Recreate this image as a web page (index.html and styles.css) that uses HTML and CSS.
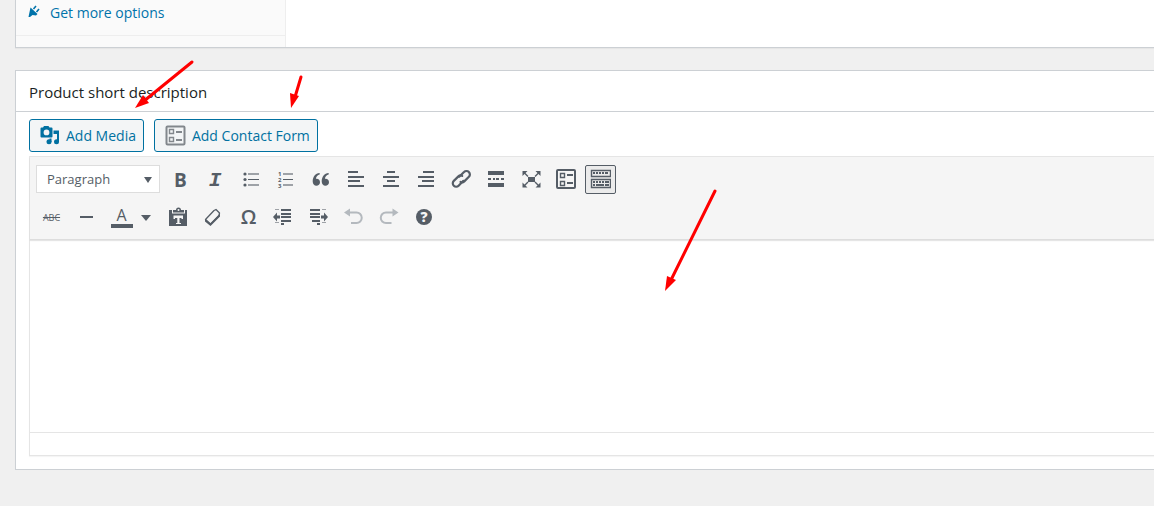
FILE: index.html
```
<!DOCTYPE html>
<html lang="en">
<head>
  <meta charset="UTF-8">
  <meta name="viewport" content="width=device-width, initial-scale=1.0">
  <title>Edit product</title>
  <link rel="stylesheet" href="styles.css">
</head>
<body>
  <section class="panel product-data">
    <div class="product-tabs">
      <a href="#" class="tab-link">
        <svg class="plug-icon" viewBox="0 0 12 12">
          <path d="M2.500 2.500L9.500 9 8 10.500 4.500 10 2 12H.5L1 9.500z"/>
          <path d="M5.500 4l2.500-3M8.500 7l2.500-3" stroke="currentColor" stroke-width="1.600"/>
        </svg>
        Get more options
      </a>
    </div>
  </section>

  <section class="panel">
    <h2 class="panel-title">Product short description</h2>
    <div class="panel-body">
      <div class="media-buttons">
        <button type="button" class="media-btn">
          <svg class="media-icon" viewBox="0 0 20 20">
            <path fill-rule="evenodd" d="M1.500 2.500H3L4 1H8.500L9.500 2.500H11.500Q12.500 2.500 12.500 3.500V11.500Q12.500 12.500 11.500 12.500H1.500Q.5 12.500.5 11.500V3.500Q.5 2.500 1.500 2.500ZM6.500 4.500a2.900 2.900 0 1 0 0 5.800a2.900 2.900 0 1 0 0-5.800z"/>
            <path d="M13.500 5.500H19V17h-2V9h-3.500zM9.500 13.500h2V17h-2z"/>
            <circle cx="16.500" cy="16.800" r="2.500"/>
            <circle cx="9" cy="16.800" r="2.500"/>
          </svg>
          Add Media
        </button>
        <button type="button" class="media-btn">
          <svg class="form-icon" viewBox="0 0 21 21">
            <rect x="1.500" y="1.500" width="18" height="18" rx="1" fill="none" stroke="currentColor" stroke-width="2"/>
            <path d="M4.500 4.500h4v4h-4zM4.500 12.500h4v4h-4z" fill="none" stroke="currentColor" stroke-width="1.400"/>
            <path d="M11 6h6v2h-6zM11 14h6v2h-6z"/>
          </svg>
          Add Contact Form
        </button>
      </div>

      <div class="editor">
        <div class="toolbar">
          <div class="toolbar-row">
            <div class="format">
              <select class="format-select" aria-label="Format">
                <option>Paragraph</option>
                <option>Heading 1</option>
                <option>Heading 2</option>
                <option>Preformatted</option>
              </select>
            </div>
            <button type="button" class="tool bold" aria-label="Bold">B</button>
            <button type="button" class="tool" aria-label="Italic">
              <svg class="italic-icon" viewBox="0 0 21 21"><text class="italic-mark" x="10" y="17">I</text></svg>
            </button>
            <button type="button" class="tool" aria-label="Bulleted list">
              <svg viewBox="0 0 21 21">
                <circle cx="5" cy="5" r="1.600"/><circle cx="5" cy="10.500" r="1.600"/><circle cx="5" cy="16" r="1.600"/>
                <path class="soft" d="M8 4h11v2H8zM8 15h11v2H8z"/>
                <path d="M8 10h11v1H8z"/>
              </svg>
            </button>
            <button type="button" class="tool" aria-label="Numbered list">
              <svg viewBox="0 0 21 21">
                <text class="digit" x="3" y="7">1</text>
                <text class="digit" x="3" y="13">2</text>
                <text class="digit" x="3" y="19">3</text>
                <path class="soft" d="M8 4h10v2H8zM8 15h10v2H8z"/>
                <path d="M8 10h10v1H8z"/>
              </svg>
            </button>
            <button type="button" class="tool" aria-label="Blockquote">
              <svg viewBox="0 0 21 21">
                <path id="quote-mark" d="M9.500 4C5.500 4.500 2.700 7.500 2.700 12.500c0 2.600 1.600 4.200 3.700 4.200 2 0 3.600-1.500 3.600-3.500S8.600 9.700 6.700 9.700c-.3 0-.6 0-.8.1C6.200 7.600 7.500 6.200 9.900 5.300z"/>
                <use href="#quote-mark" x="9"/>
              </svg>
            </button>
            <button type="button" class="tool" aria-label="Align left">
              <svg viewBox="0 0 21 21"><path d="M3 2h10v2H3zM3 7h16v2H3zM3 11h12v2H3zM3 16h16v2H3z"/></svg>
            </button>
            <button type="button" class="tool" aria-label="Align center">
              <svg viewBox="0 0 21 21"><path d="M7 2h8v2H7zM3 7h16v2H3zM7 11h8v2H7zM3 16h16v2H3z"/></svg>
            </button>
            <button type="button" class="tool" aria-label="Align right">
              <svg viewBox="0 0 21 21"><path d="M8 2h11v2H8zM3 7h16v2H3zM7 11h12v2H7zM3 16h16v2H3z"/></svg>
            </button>
            <button type="button" class="tool" aria-label="Insert link">
              <svg viewBox="0 0 21 21">
                <g fill="none" stroke="currentColor" stroke-width="2.200" stroke-linecap="round">
                  <path d="M9.200 7.700l4.800-4.600a3.300 3.300 0 0 1 4.900 0a3.300 3.300 0 0 1 0 4.700l-4.600 4.600a3.300 3.300 0 0 1-3.800.5"/>
                  <path d="M13.400 11.800l-4.800 4.900a3.300 3.300 0 0 1-4.800 0a3.300 3.300 0 0 1 0-4.800l4.600-4.500a3.300 3.300 0 0 1 3.800-.5"/>
                </g>
              </svg>
            </button>
            <button type="button" class="tool" aria-label="Insert Read More tag">
              <svg viewBox="0 0 21 21"><path d="M3 2h16v4H3zM3 9h3v2H3zM8 9h2v2H8zM11 9h3v2h-3zM16 9h3v2h-3zM3 14h16v4H3z"/></svg>
            </button>
            <button type="button" class="tool" aria-label="Fullscreen">
              <svg viewBox="0 0 21 21">
                <path d="M8 8h7v5H8zM2.500 2h5L2.500 7zM20.500 2h-5l5 5zM2.500 18.500h5l-5-5zM20.500 18.500h-5l5-5z"/>
                <path d="M4 3.500l4 4M19 3.500l-4 4M4 17l4-4M19 17l-4-4" stroke="currentColor" stroke-width="1.400"/>
              </svg>
            </button>
            <button type="button" class="tool" aria-label="Insert contact form">
              <svg viewBox="0 0 21 21">
                <rect x="2" y="1" width="18" height="18" rx="1" fill="none" stroke="currentColor" stroke-width="2"/>
                <path d="M5.500 4.500h4v4h-4zM5.500 12.500h4v4h-4z" fill="none" stroke="currentColor" stroke-width="1.400"/>
                <path d="M12 5h6v2h-6zM12 13h6v2h-6z"/>
              </svg>
            </button>
            <button type="button" class="tool active" aria-label="Toolbar toggle" aria-pressed="true">
              <svg viewBox="0 0 21 21">
                <path d="M1.500 1.500h19v6h-19zM1.500 10.500h19v8h-19z" fill="none" stroke="currentColor" stroke-width="1.400"/>
                <path d="M3 3h2v2H3zM6 3h2v2H6zM9 3h2v2H9zM12 3h2v2h-2zM15 3h3v2h-3zM3 12h2v2H3zM6 12h2v2H6zM9 12h2v2H9zM12 12h2v2h-2zM15 12h4v2h-4zM3 15h2v2H3zM6 15h8v2H6zM15 15h4v2h-4z"/>
              </svg>
            </button>
          </div>

          <div class="toolbar-row">
            <button type="button" class="tool strike" aria-label="Strikethrough">ABC</button>
            <button type="button" class="tool" aria-label="Horizontal line">
              <svg viewBox="0 0 21 21"><path d="M4 9h13v2H4z"/></svg>
            </button>
            <div class="color-split">
              <button type="button" class="tool" aria-label="Text color"><span class="color-letter">A</span></button>
              <button type="button" class="color-open" aria-label="Choose text color"><span class="caret"></span></button>
            </div>
            <button type="button" class="tool" aria-label="Paste as text">
              <svg viewBox="0 0 21 21">
                <path d="M5 5.500V3h3a2.500 2.500 0 0 1 5 0h3v2.500z"/>
                <path d="M1 3h3v3.500h13V3h2v16H1z"/>
                <path class="cut" d="M5.500 8.500h9.500v3.500h-1.500V11H11.500V16H13v1H8v-1h1.300V11H7V12H5.500z"/>
                <circle class="cut" cx="10.500" cy="3" r="1"/>
              </svg>
            </button>
            <button type="button" class="tool" aria-label="Clear formatting">
              <svg viewBox="0 0 21 21">
                <path d="M11 3.500L13 2.500 16.500 6 16 8.500 7.500 17 2.500 12.500z" fill="none" stroke="currentColor" stroke-width="1.300" stroke-linejoin="round"/>
                <path d="M2 12l5.500 4.500L17 6.500V9.500L7.500 19 2 14.500z"/>
              </svg>
            </button>
            <button type="button" class="tool omega" aria-label="Special character">Ω</button>
            <button type="button" class="tool" aria-label="Decrease indent">
              <svg viewBox="0 0 21 21">
                <path d="M8 2h10v2H8zM8 6h10v2H8zM8 9h10v2H8zM8 13h10v2H8zM8 16h3v2H8zM4 5.500v3H7v3H4v3L0 10z"/>
                <path class="soft" d="M2 2h4v1H2zM2 15h4v1H2z"/>
              </svg>
            </button>
            <button type="button" class="tool" aria-label="Increase indent">
              <svg viewBox="0 0 21 21">
                <path d="M2 2h10v2H2zM2 6h10v2H2zM2 9h10v2H2zM4 13h8v2H4zM9 16h3v2H9zM16 5.500v3H13v3h3v3l4-4.500z"/>
                <path class="soft" d="M14 2h4v1h-4zM14 15h4v1h-4z"/>
              </svg>
            </button>
            <button type="button" class="tool" aria-label="Undo" disabled>
              <svg viewBox="0 0 21 21">
                <path d="M1 5.500L7 1.500v8z"/>
                <path d="M6 5.500h7.500a5 5 0 0 1 0 10.500H8" fill="none" stroke="currentColor" stroke-width="2"/>
              </svg>
            </button>
            <button type="button" class="tool" aria-label="Redo" disabled>
              <svg viewBox="0 0 21 21">
                <path d="M20.500 5.500l-6-4v8z"/>
                <path d="M15 5.500H8A5 5 0 0 0 8 16h5.500" fill="none" stroke="currentColor" stroke-width="2"/>
              </svg>
            </button>
            <button type="button" class="tool" aria-label="Keyboard shortcuts">
              <svg viewBox="0 0 21 21">
                <circle cx="11" cy="10" r="8"/>
                <text class="help-mark" x="11" y="15">?</text>
              </svg>
            </button>
          </div>
        </div>
        <textarea class="editor-text" aria-label="Product short description"></textarea>
        <div class="status-bar"></div>
      </div>
    </div>
  </section>

  <!-- pointers drawn over the page -->
  <svg class="arrows" width="740" height="300" viewBox="0 0 740 300">
    <g stroke="#f00" stroke-width="3" stroke-linecap="round">
      <path d="M192 62L144 101"/>
      <path d="M301 77L295 97"/>
      <path d="M715 191L671 280"/>
    </g>
    <g fill="#f00">
      <path d="M135 108l8-13 6 8z"/>
      <path d="M291 108l-1-15 9 3z"/>
      <path d="M665 291l2-15 9 4z"/>
    </g>
  </svg>
</body>
</html>
```
FILE: styles.css
```
* {
  box-sizing: border-box;
}

body {
  font-family: "Open Sans", "Noto Sans", sans-serif;
  font-size: 14px;
  margin: 0;
  padding-left: 15px;
  background-color: #f0f0f0;
  color: #23282d;
  overflow-x: hidden;
}

button,
select,
textarea {
  font-family: inherit;
  font-size: 14px;
}

svg {
  display: block;
  flex: none;
  fill: currentColor;
}

.panel {
  background-color: #fff;
  border: 1px solid #ccd0d4;
  border-right: none;
  box-shadow: 0 1px 1px rgba(0, 0, 0, 0.04);
}

.product-data {
  border-top: none;
  margin-bottom: 22px;
}

.product-tabs {
  width: 270px;
  padding-bottom: 11px;
  background-color: #fafafa;
  border-right: 1px solid #eee;
}

.tab-link {
  display: flex;
  align-items: center;
  gap: 10px;
  height: 36px;
  padding: 0 12px 10px;
  border-bottom: 1px solid #eee;
  color: #0073aa;
  text-decoration: none;
}

.plug-icon {
  width: 12px;
  height: 12px;
  margin-bottom: 4px;
}

.panel-title {
  margin: 0;
  padding: 3px 13px 0;
  border-bottom: 1px solid #ccd0d4;
  color: #1a1f24;
  font-size: 15px;
  font-weight: 500;
  line-height: 37px;
}

.panel-body {
  padding: 7px 0 13px 13px;
}

.media-buttons {
  display: flex;
  gap: 10px;
  margin-bottom: 4px;
}

.media-btn {
  display: flex;
  align-items: center;
  gap: 6px;
  height: 33px;
  padding: 0 7px 1px 10px;
  background-color: #f3f5f6;
  border: 1px solid #0071a1;
  border-radius: 3px;
  color: #0071a1;
  cursor: pointer;
}

.media-icon {
  width: 20px;
  height: 20px;
}

.form-icon {
  width: 21px;
  height: 21px;
  color: #82878c;
}

.editor {
  border: 1px solid #e5e5e5;
  border-right: none;
  box-shadow: 0 1px 1px rgba(0, 0, 0, 0.04);
}

.toolbar {
  display: flex;
  flex-direction: column;
  gap: 9px;
  padding: 8px 6px 7px;
  background-color: #f5f5f5;
  border-bottom: 1px solid #ddd;
  box-shadow: 0 1px 1px rgba(0, 0, 0, 0.1);
}

.toolbar-row {
  display: flex;
  gap: 4px;
}

.format {
  position: relative;
  width: 124px;
  margin-right: 1px;
}

.format::after {
  content: "";
  position: absolute;
  right: 8px;
  top: 12px;
  border: 4px solid transparent;
  border-top: 6px solid #555d66;
  border-bottom: none;
  pointer-events: none;
}

.format-select {
  width: 100%;
  height: 28px;
  padding: 0 10px;
  appearance: none;
  background-color: #fff;
  border: 1px solid #ddd;
  border-radius: 0;
  color: #555d66;
  font-size: 13px;
}

.tool {
  display: flex;
  align-items: center;
  justify-content: center;
  width: 31px;
  height: 29px;
  padding: 0;
  background: none;
  border: 1px solid transparent;
  border-radius: 2px;
  color: #555d66;
  cursor: pointer;
}

.tool svg {
  width: 21px;
  height: 21px;
}

.tool:disabled {
  color: #b4b9be;
  cursor: default;
}

.tool.active {
  background-color: #ebebeb;
  border-color: #555d66;
}

.bold {
  font-size: 19px;
  font-weight: 700;
}

.italic-icon {
  overflow: visible;
}

.italic-mark {
  font-family: "Liberation Mono", monospace;
  font-size: 21px;
  font-style: italic;
  font-weight: bold;
  text-anchor: middle;
}

.strike {
  font-size: 9px;
  text-decoration: line-through;
}

.omega {
  padding-bottom: 2px;
  font-size: 20px;
  font-weight: 600;
}

.soft {
  opacity: 0.55;
}

.digit {
  font-size: 6px;
  font-weight: bold;
}

.cut {
  fill: #f5f5f5;
}

.help-mark {
  fill: #f5f5f5;
  font-size: 14px;
  font-weight: 800;
  text-anchor: middle;
}

.color-split {
  display: flex;
  width: 53px;
}

.color-letter {
  width: 22px;
  border-bottom: 4px solid #555d66;
  font-size: 16px;
  font-weight: 500;
  line-height: 17px;
}

.color-open {
  flex: 1;
  padding: 0 0 0 4px;
  background: none;
  border: none;
  cursor: pointer;
}

.caret {
  display: block;
  width: 10px;
  border: 5px solid transparent;
  border-top: 6px solid #555d66;
  border-bottom: none;
}

.editor-text {
  display: block;
  width: 100%;
  height: 192px;
  padding: 10px;
  border: none;
  resize: none;
  background: transparent;
}

.status-bar {
  height: 23px;
  border-top: 1px solid #e5e5e5;
}

.arrows {
  position: absolute;
  left: 0;
  top: 0;
  pointer-events: none;
}
```
